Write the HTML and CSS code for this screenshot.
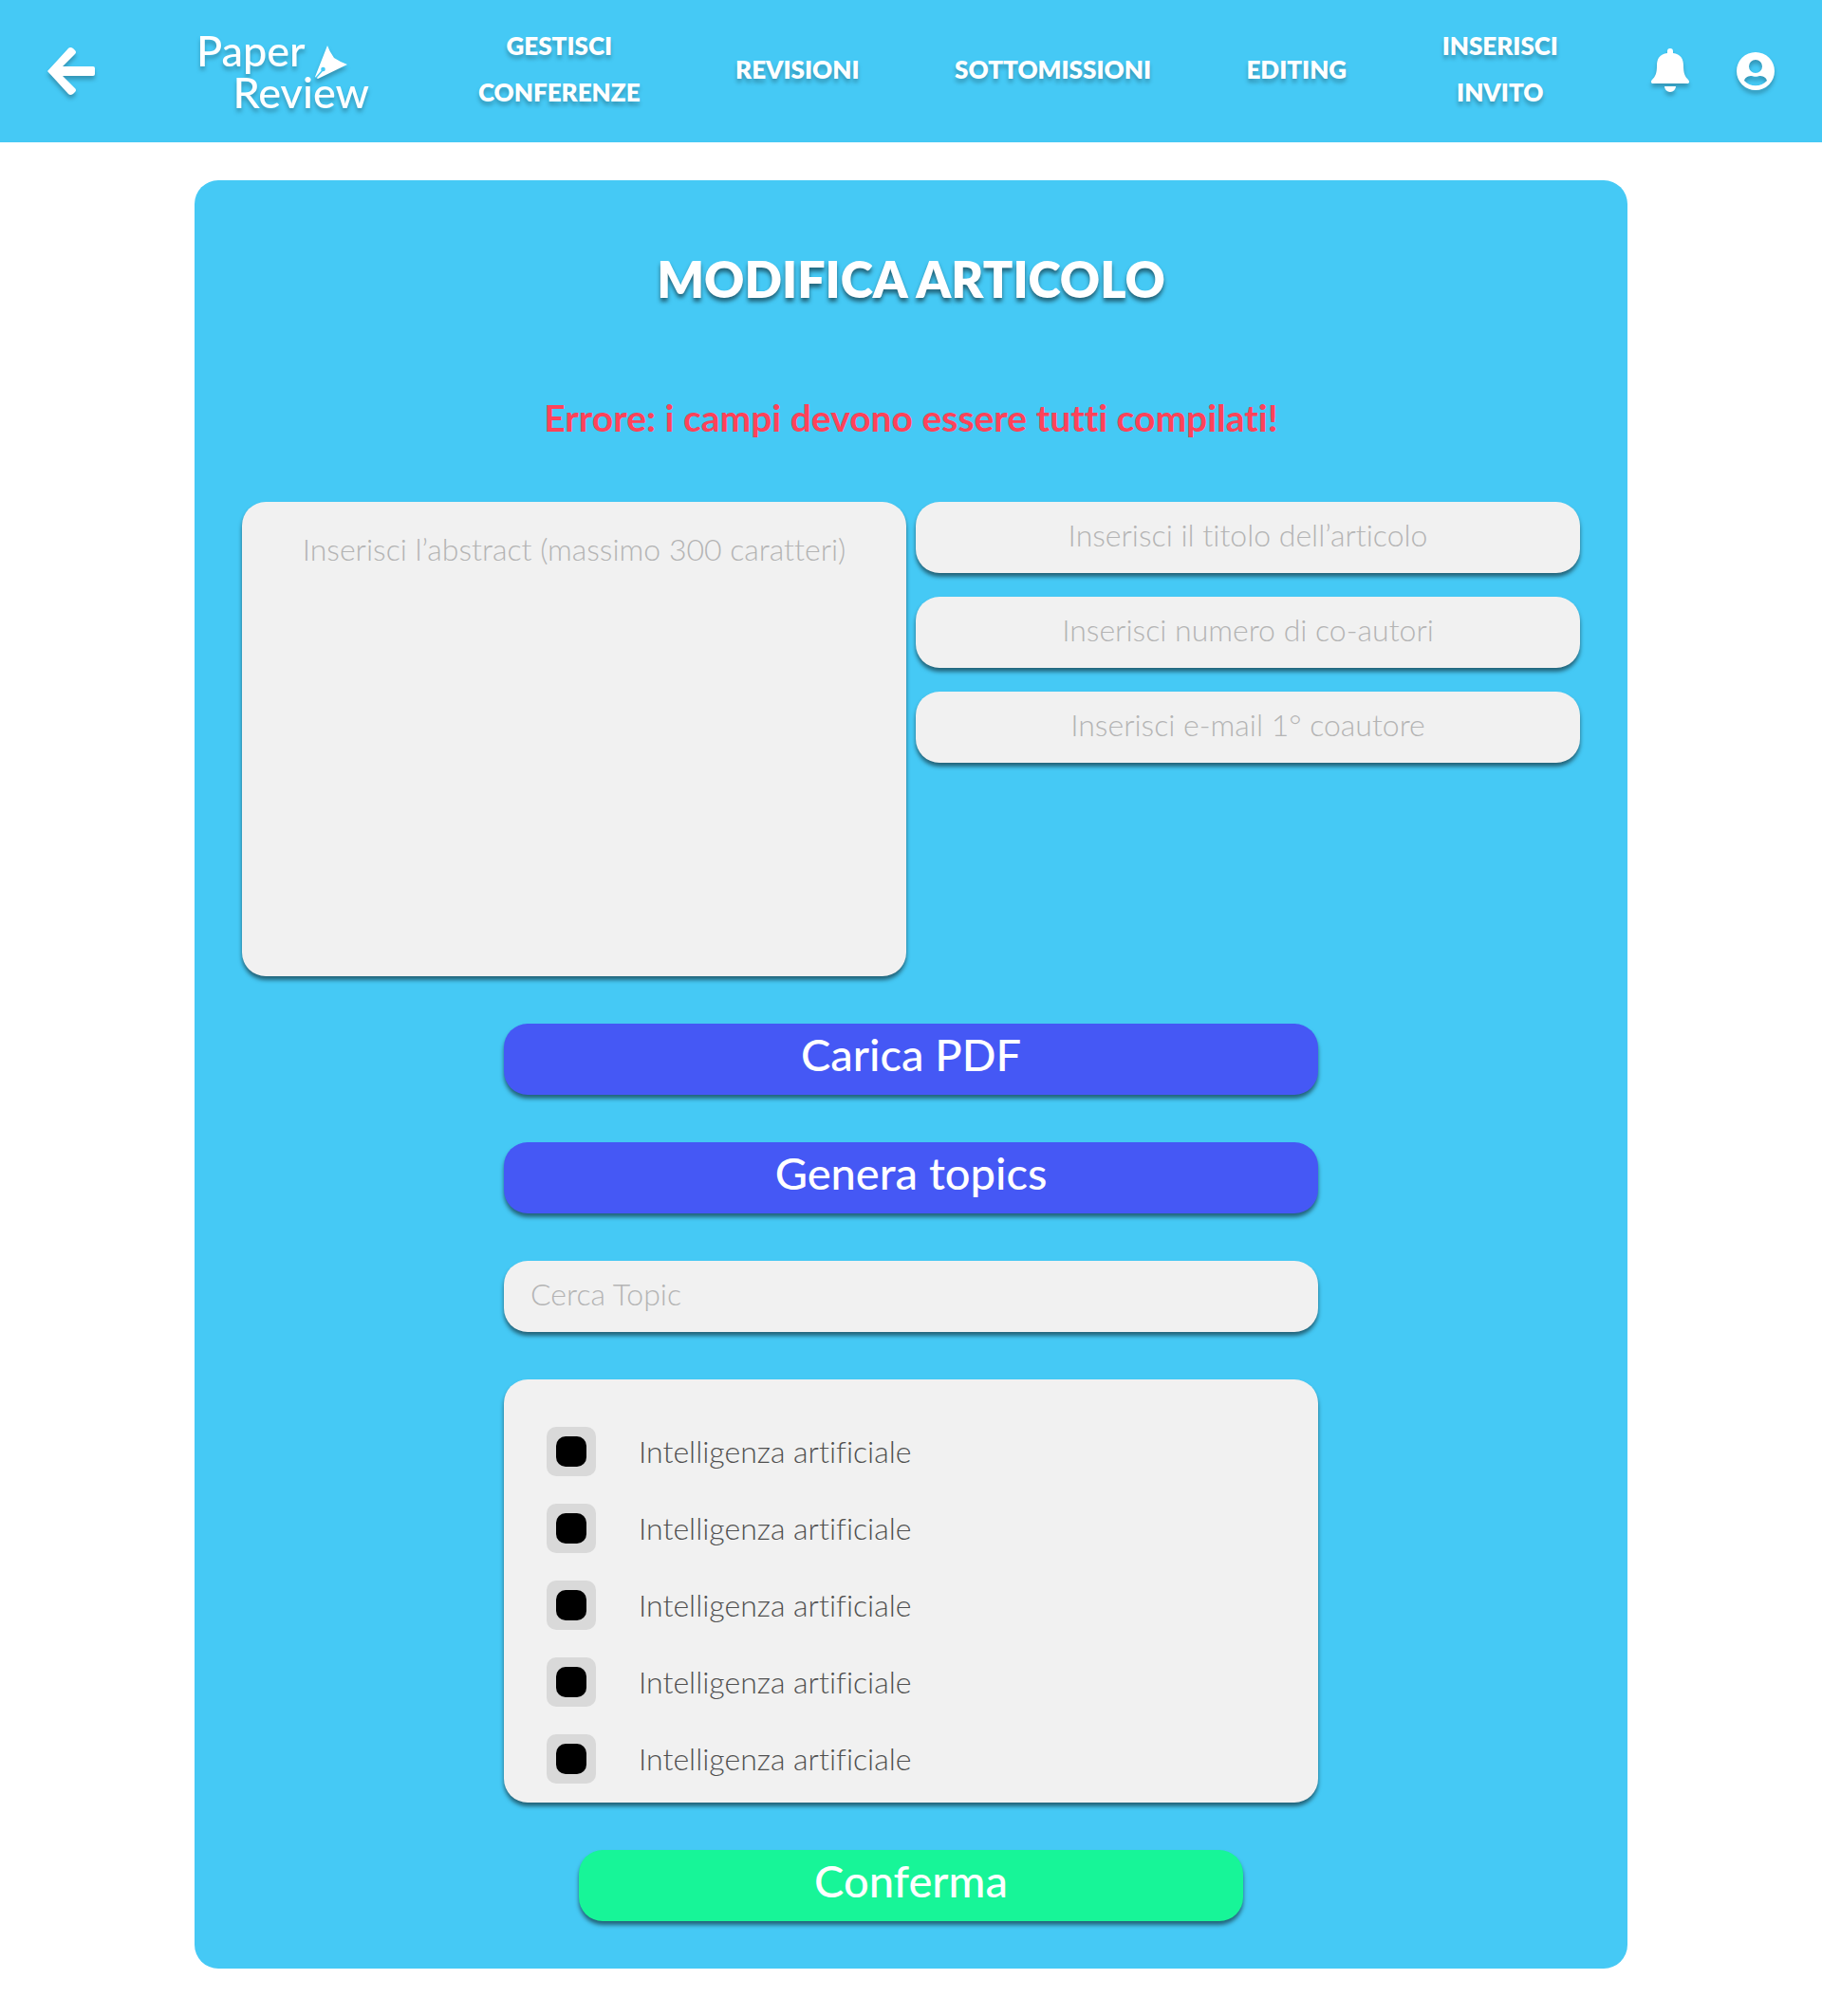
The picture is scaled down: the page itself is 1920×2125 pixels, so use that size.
FILE: index.html
```html
<!DOCTYPE html>
<html lang="it">
<head>
<meta charset="utf-8">
<title>Paper Review - Modifica articolo</title>
<meta name="viewport" content="width=device-width, initial-scale=1">
<link rel="stylesheet" href="styles.css">
</head>
<body>
<header class="topbar">
  <button class="icon-button back" type="button" aria-label="Indietro">
    <svg class="icon-arrow" viewBox="0 0 50 50" aria-hidden="true"><path d="M0 25 22 1Q24-1 27 1L29 3Q31 5 29 7L16 20H48Q50 20 50 22V28Q50 30 48 30H16L29 43Q31 45 29 47L27 49Q24 51 22 49Z" fill="#fff"/></svg>
  </button>
  <a class="logo" href="#" aria-label="Paper Review">
    <span class="logo-top">Paper<svg class="logo-nib" viewBox="0 0 34 35" aria-hidden="true"><path d="M13 0Q15 6 20 13Q26 17 34 20L3 35L0 33Z" fill="#fff"/><circle cx="8.500" cy="25" r="2.300" fill="#45c9f5"/><path d="M8 26 1 34" stroke="#45c9f5" stroke-width="1.500"/></svg></span>
    <span class="logo-bottom">Review</span>
  </a>
  <nav class="menu">
    <a class="menu-link" href="#">GESTISCI<br>CONFERENZE</a>
    <a class="menu-link" href="#">REVISIONI</a>
    <a class="menu-link" href="#">SOTTOMISSIONI</a>
    <a class="menu-link" href="#">EDITING</a>
    <a class="menu-link" href="#">INSERISCI<br>INVITO</a>
  </nav>
  <div class="actions">
    <button class="icon-button" type="button" aria-label="Notifiche">
      <svg class="icon-small" viewBox="0 0 40 48" aria-hidden="true"><path d="M20 0a3 3 0 0 0-3 3v2C9 6 6 11 6 18c0 9-2 12-5 15-2 2-1 4 1 4h36c2 0 3-2 1-4-3-3-5-6-5-15 0-7-3-12-11-13V3a3 3 0 0 0-3-3zM14 40h12a6 6 0 0 1-12 0z" fill="#fff"/></svg>
    </button>
    <button class="icon-button" type="button" aria-label="Profilo">
      <svg class="icon-small" viewBox="0 0 40 48" aria-hidden="true"><path fill-rule="evenodd" d="M20 4a20 20 0 1 0 0 40 20 20 0 0 0 0-40zm0 8a7 7 0 1 1 0 14 7 7 0 0 1 0-14zM8 34c1-4 5-5 8-5 2 1 6 1 8 0 3 0 7 1 8 5-6 7-18 7-24 0z" fill="#fff"/></svg>
    </button>
  </div>
</header>
<main class="card">
  <h1 class="title">MODIFICA ARTICOLO</h1>
  <p class="error" role="alert">Errore: i campi devono essere tutti compilati!</p>
  <form class="form">
    <div class="fields">
      <textarea class="field abstract" aria-label="Abstract" maxlength="300" placeholder="Inserisci l’abstract (massimo 300 caratteri)"></textarea>
      <div class="inputs">
        <input class="field" type="text" aria-label="Titolo" placeholder="Inserisci il titolo dell’articolo">
        <input class="field" type="text" aria-label="Numero di co-autori" placeholder="Inserisci numero di co-autori">
        <input class="field" type="email" aria-label="E-mail 1° coautore" placeholder="Inserisci e-mail 1° coautore">
      </div>
    </div>
    <div class="stack">
      <button class="button" type="button">Carica PDF</button>
      <button class="button" type="button">Genera topics</button>
      <input class="field search" type="search" aria-label="Cerca topic" placeholder="Cerca Topic">
      <div class="topics">
        <label class="topic"><input class="tick" type="checkbox" checked>Intelligenza artificiale</label>
        <label class="topic"><input class="tick" type="checkbox" checked>Intelligenza artificiale</label>
        <label class="topic"><input class="tick" type="checkbox" checked>Intelligenza artificiale</label>
        <label class="topic"><input class="tick" type="checkbox" checked>Intelligenza artificiale</label>
        <label class="topic"><input class="tick" type="checkbox" checked>Intelligenza artificiale</label>
      </div>
    </div>
    <button class="button confirm" type="submit">Conferma</button>
  </form>
</main>
</body>
</html>
```
FILE: styles.css
```css
* {
  box-sizing: border-box;
}

body {
  margin: 0;
  background: #fff;
  font-family: Lato, "Open Sans", sans-serif;
  font-size: 32px;
  font-variant-ligatures: none;
}

button,
input,
textarea {
  font: inherit;
  font-variant-ligatures: none;
}

.topbar {
  display: flex;
  align-items: center;
  min-height: 150px;
  padding: 0 50px;
  background: #45c9f5;
}

.icon-button {
  display: block;
  padding: 0;
  border: 0;
  background: none;
  cursor: pointer;
}

.icon-button svg {
  display: block;
  overflow: visible;
  filter: drop-shadow(0 4px 2px rgba(0, 0, 0, 0.25));
}

.icon-arrow {
  width: 50px;
  height: 50px;
}

.icon-small {
  width: 40px;
  height: 48px;
}

.logo {
  display: flex;
  flex-direction: column;
  width: 182px;
  margin: 0 115px 0 107px;
  color: #fff;
  font-size: 45px;
  font-weight: 500;
  line-height: 44px;
  text-decoration: none;
  filter: drop-shadow(0 4px 2px rgba(0, 0, 0, 0.25));
}

.logo-top {
  display: flex;
  align-items: flex-end;
  gap: 10px;
}

.logo-nib {
  width: 34px;
  height: 35px;
  margin-bottom: -8px;
}

.logo-bottom {
  align-self: flex-end;
}

.menu {
  display: flex;
  flex: 1;
  align-items: center;
  justify-content: space-between;
  padding-bottom: 4px;
}

.menu-link {
  color: #fff;
  font-size: 26px;
  font-weight: 800;
  line-height: 49px;
  text-align: center;
  text-decoration: none;
  text-shadow: 0 4px 4px rgba(0, 0, 0, 0.25);
}

.actions {
  display: flex;
  gap: 50px;
  margin-left: 98px;
}

.card {
  max-width: 1510px;
  margin: 40px auto 50px;
  padding: 50px;
  border-radius: 25px;
  background: #45c9f5;
}

.title {
  margin: 0;
  color: #fff;
  font-size: 52px;
  font-weight: 800;
  line-height: 108px;
  text-align: center;
  text-shadow: 0 4px 4px rgba(0, 0, 0, 0.5);
}

.error {
  margin: 58px 0 55px;
  color: #ff4259;
  font-size: 39px;
  font-weight: 700;
  line-height: 68px;
  text-align: center;
}

.form {
  display: flex;
  flex-direction: column;
  align-items: center;
  gap: 50px;
}

.fields {
  display: grid;
  grid-template-columns: 1fr 1fr;
  gap: 10px;
  width: 100%;
}

.inputs {
  display: flex;
  flex-direction: column;
  gap: 25px;
}

.field {
  width: 100%;
  height: 75px;
  padding: 0 28px 7px;
  border: 0;
  border-radius: 25px;
  outline: 0;
  background: #f1f1f1;
  box-shadow: 0 4px 4px rgba(0, 0, 0, 0.5);
  color: #5e5e5e;
  font-weight: 300;
  text-align: center;
}

.field::placeholder {
  color: #b4b4b4;
  opacity: 1;
}

.abstract {
  display: block;
  height: 500px;
  padding-top: 25px;
  line-height: 50px;
  resize: none;
}

.stack {
  display: flex;
  flex-direction: column;
  gap: 50px;
  width: 100%;
  max-width: 858px;
}

.button {
  width: 100%;
  height: 75px;
  padding: 0 0 12px;
  border: 0;
  border-radius: 25px;
  background: #4558f5;
  box-shadow: 0 4px 4px rgba(0, 0, 0, 0.5);
  color: #fff;
  font-size: 47px;
  font-weight: 500;
  cursor: pointer;
}

.search {
  appearance: none;
  text-align: left;
}

.topics {
  display: flex;
  flex-direction: column;
  gap: 29px;
  padding: 50px 45px 20px;
  border-radius: 25px;
  background: #f1f1f1;
  box-shadow: 0 4px 4px rgba(0, 0, 0, 0.5);
}

.topic {
  display: flex;
  align-items: center;
  gap: 45px;
  color: #505050;
  font-weight: 300;
  line-height: 52px;
}

.tick {
  width: 52px;
  height: 52px;
  margin: 0;
  border-radius: 10px;
  appearance: none;
  background: #d9d9d9;
}

.tick:checked::before {
  display: block;
  width: 32px;
  height: 32px;
  margin: 10px;
  border-radius: 10px;
  background: #000;
  content: "";
}

.confirm {
  max-width: 700px;
  background: #17f598;
}
```
